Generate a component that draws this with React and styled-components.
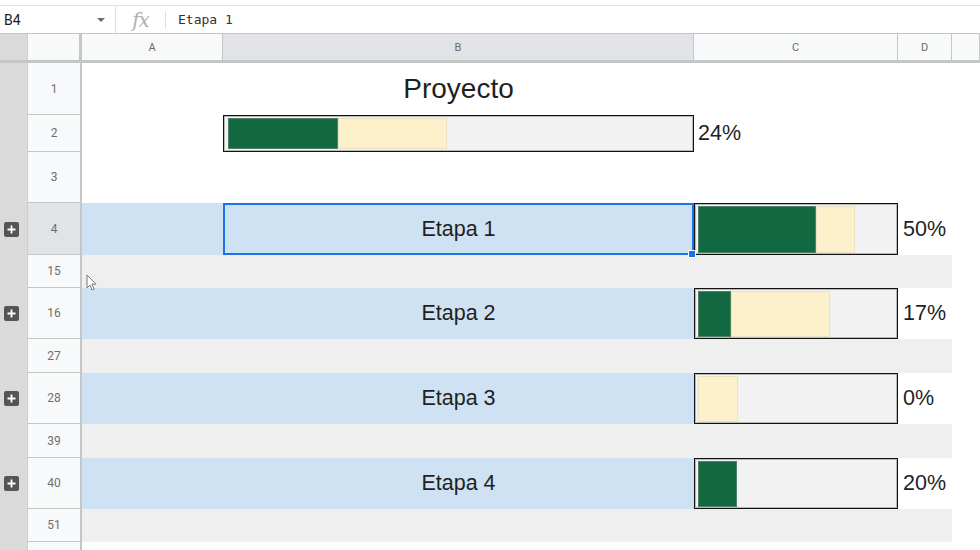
import React from "react";
import styled, { createGlobalStyle } from "styled-components";

const GlobalStyle = createGlobalStyle`
  html, body {
    margin: 0;
    padding: 0;
    background: #fff;
    overflow: hidden;
  }
  * { box-sizing: border-box; }
`;

const COLS = "28px 54px 141px 471px 204px 54px 1fr";
const HeaderGray = "#f8f9fa";
const SelectedHeader = "#e1e3e6";
const GridLine = "#c4c7c5";
const Blue = "#cfe2f3";
const Stripe = "#efefef";

const Sheet = styled.div`
  width: 980px;
  height: 550px;
  position: relative;
  overflow: hidden;
  font-family: Roboto, "Liberation Sans", sans-serif;
`;

const TopStrip = styled.div`
  height: 6px;
  border-bottom: 1px solid #e3e3e3;
`;

const FormulaBar = styled.div`
  height: 28px;
  display: flex;
  align-items: center;
  border-bottom: 1px solid ${GridLine};
`;

const NameBox = styled.div`
  width: 116px;
  height: 100%;
  display: flex;
  align-items: center;
  justify-content: space-between;
  padding: 0 10px 0 4px;
  font-size: 14px;
  color: #202124;
  border-right: 1px solid #e0e0e0;
`;

const Caret = styled.span`
  width: 0;
  height: 0;
  border-left: 4px solid transparent;
  border-right: 4px solid transparent;
  border-top: 4px solid #6b6b6b;
`;

const Fx = styled.div`
  width: 50px;
  height: 18px;
  display: flex;
  align-items: center;
  justify-content: center;
  font-family: "DejaVu Serif", "Liberation Serif", serif;
  font-style: italic;
  font-size: 20px;
  color: #b0b0b0;
  border-right: 1px solid #e0e0e0;
  letter-spacing: -1px;
`;

const FormulaText = styled.div`
  padding-left: 12px;
  font-family: "DejaVu Sans Mono", "Liberation Mono", monospace;
  font-size: 13px;
  color: #333;
`;

const Row = styled.div`
  display: grid;
  grid-template-columns: ${COLS};
  height: ${(p) => p.$h}px;
`;

const HeaderRow = styled(Row)`
  border-bottom: 3px solid ${GridLine};
`;

const Gutter = styled.div`
  background: #dadada;
  border-right: 1px solid #cfcfcf;
  display: flex;
  align-items: center;
  padding-left: 4px;
`;

const Corner = styled.div`
  background: ${HeaderGray};
  border-right: 3px solid ${GridLine};
`;

const ColHead = styled.div`
  display: flex;
  align-items: center;
  justify-content: center;
  font-size: 11px;
  color: #6a6a6a;
  background: ${(p) => (p.$selected ? SelectedHeader : HeaderGray)};
  border-right: 1px solid ${GridLine};
`;

const RowHead = styled.div`
  display: flex;
  align-items: center;
  justify-content: center;
  font-size: 12px;
  color: #6f6f6f;
  background: ${(p) => (p.$selected ? SelectedHeader : HeaderGray)};
  border-right: 2px solid ${GridLine};
  border-bottom: 1px solid ${GridLine};
`;

const Cell = styled.div`
  position: relative;
  display: flex;
  align-items: center;
  justify-content: ${(p) => (p.$center ? "center" : "flex-start")};
  padding-left: ${(p) => p.$pad || 0}px;
  background: ${(p) => p.$bg || "#fff"};
  font-family: "Liberation Sans", Arial, sans-serif;
  font-size: ${(p) => p.$size || 21.5}px;
  color: #1f1f1f;
  white-space: nowrap;
  z-index: ${(p) => (p.$front ? 2 : "auto")};
`;

const Selection = styled.div`
  position: absolute;
  inset: 0;
  border: 2px solid #1a73e8;
  pointer-events: none;
`;

const Handle = styled.span`
  position: absolute;
  right: -4px;
  bottom: -5px;
  width: 8px;
  height: 8px;
  background: #1a73e8;
  border: 1px solid #fff;
`;

const ExpandButton = styled.span`
  width: 15px;
  height: 15px;
  border-radius: 2px;
  background: #555;
  color: #fff;
  display: flex;
  align-items: center;
  justify-content: center;
`;

const Bar = styled.div`
  width: 100%;
  height: 100%;
  display: flex;
  border: 1px solid #111;
  box-shadow: inset 0 0 0 1px #b8b8b8;
  background: #f2f2f2;
  padding: ${(p) => (p.$wide ? "2px 1px 2px 4px" : "2px 1px 1px 3px")};
`;

const Done = styled.span`
  height: 100%;
  background: #126841;
  box-shadow: inset 0 0 0 1px #4f8468;
`;

const Pending = styled.span`
  height: 100%;
  background: #fdf1cc;
  box-shadow: inset 0 0 0 1px #eae2c6;
`;

const Pointer = styled.svg`
  position: absolute;
  left: 86px;
  top: 274px;
`;

const PlusIcon = () => (
  <svg width="9" height="9" viewBox="0 0 9 9">
    <path d="M4.5 0.5v8M0.5 4.5h8" stroke="#fff" strokeWidth="1.8" />
  </svg>
);

const Progress = ({ done, pending, wide }) => (
  <Bar $wide={wide}>
    {done > 0 && <Done style={{ width: done }} />}
    {pending > 0 && <Pending style={{ width: pending }} />}
  </Bar>
);

const stages = [
  { n: 4, gap: 15, label: "Etapa 1", done: 118, pending: 39, pct: "50%", selected: true },
  { n: 16, gap: 27, label: "Etapa 2", done: 33, pending: 99, pct: "17%" },
  { n: 28, gap: 39, label: "Etapa 3", done: 0, pending: 40, pct: "0%" },
  { n: 40, gap: 51, label: "Etapa 4", done: 39, pending: 0, pct: "20%" },
];

const StageRow = ({ stage }) => (
  <>
    <Row $h={stage.selected ? 52 : 51}>
      <Gutter>
        <ExpandButton>
          <PlusIcon />
        </ExpandButton>
      </Gutter>
      <RowHead $selected={stage.selected}>{stage.n}</RowHead>
      <Cell $bg={Blue} />
      <Cell $bg={Blue} $center $front={stage.selected}>
        {stage.label}
        {stage.selected && (
          <Selection>
            <Handle />
          </Selection>
        )}
      </Cell>
      <Cell>
        <Progress done={stage.done} pending={stage.pending} />
      </Cell>
      <Cell $pad={5}>{stage.pct}</Cell>
      <Cell />
    </Row>
    <Row $h={stage.n === 4 || stage.n === 40 ? 33 : 34}>
      <Gutter />
      <RowHead>{stage.gap}</RowHead>
      <Cell $bg={Stripe} />
      <Cell $bg={Stripe} />
      <Cell $bg={Stripe} />
      <Cell $bg={Stripe} />
      <Cell />
    </Row>
  </>
);

export default function App() {
  return (
    <Sheet>
      <GlobalStyle />
      <TopStrip />
      <FormulaBar>
        <NameBox>
          B4
          <Caret />
        </NameBox>
        <Fx>fx</Fx>
        <FormulaText>Etapa 1</FormulaText>
      </FormulaBar>

      <HeaderRow $h={29}>
        <Gutter />
        <Corner />
        <ColHead>A</ColHead>
        <ColHead $selected>B</ColHead>
        <ColHead>C</ColHead>
        <ColHead>D</ColHead>
        <ColHead />
      </HeaderRow>

      <Row $h={52}>
        <Gutter />
        <RowHead>1</RowHead>
        <Cell />
        <Cell $center $size={28}>Proyecto</Cell>
        <Cell />
        <Cell />
        <Cell />
      </Row>
      <Row $h={37}>
        <Gutter />
        <RowHead>2</RowHead>
        <Cell />
        <Cell>
          <Progress done={110} pending={109} wide />
        </Cell>
        <Cell $pad={4}>24%</Cell>
        <Cell />
        <Cell />
      </Row>
      <Row $h={51}>
        <Gutter />
        <RowHead>3</RowHead>
        <Cell />
        <Cell />
        <Cell />
        <Cell />
        <Cell />
      </Row>

      {stages.map((s) => (
        <StageRow key={s.n} stage={s} />
      ))}

      <Row $h={40}>
        <Gutter />
        <RowHead>52</RowHead>
        <Cell />
        <Cell />
        <Cell />
        <Cell />
        <Cell />
      </Row>

      <Pointer width="12" height="17" viewBox="0 0 12 17">
        <path
          d="M1 1v13l3-3 2.2 5 2-.9-2.2-4.9H10z"
          fill="#fff"
          stroke="#777"
          strokeWidth="1"
          strokeLinejoin="round"
        />
      </Pointer>
    </Sheet>
  );
}
